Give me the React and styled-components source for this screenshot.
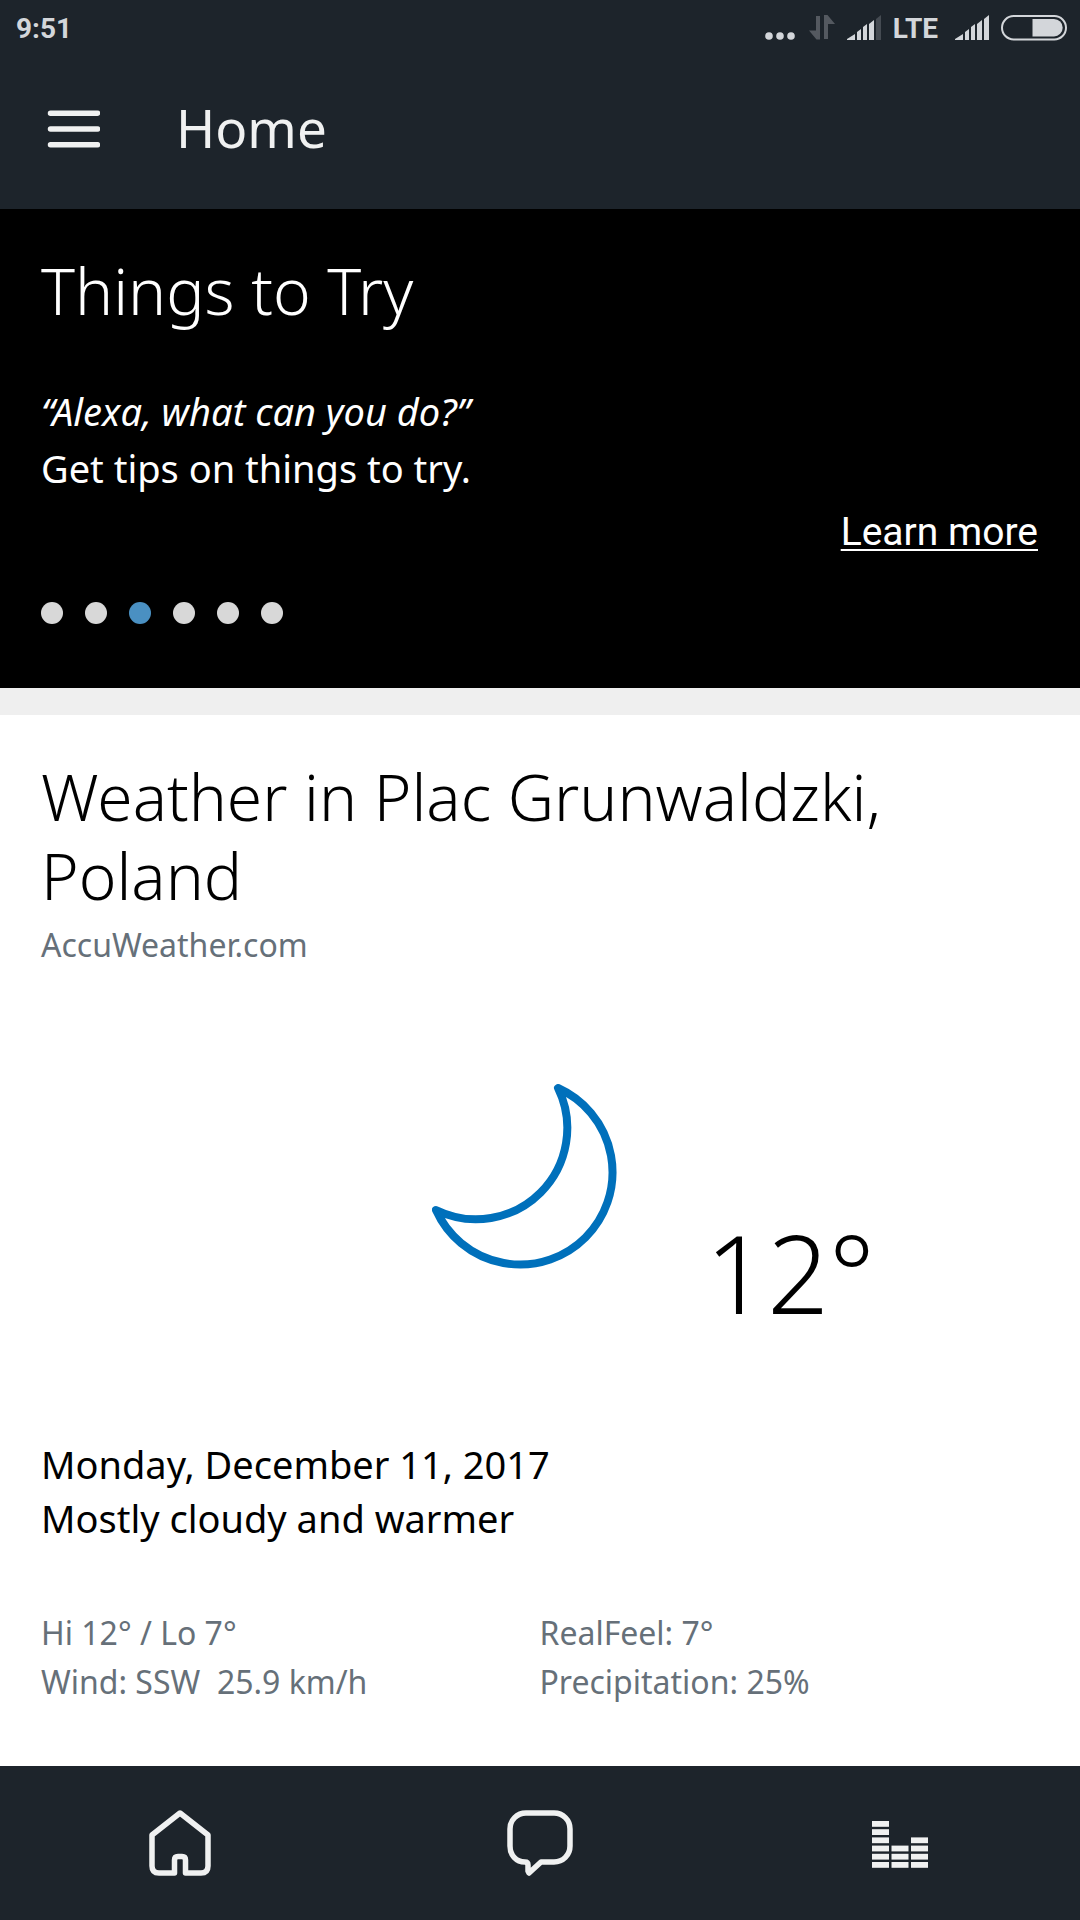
import { useState } from "react";
import styled, { createGlobalStyle } from "styled-components";

const GlobalStyle = createGlobalStyle`
  * {
    box-sizing: border-box;
  }
  body {
    margin: 0;
    background: #ffffff;
    font-family: "Noto Sans", "Open Sans", sans-serif;
  }
`;

const Page = styled.div`
  display: flex;
  flex-direction: column;
  min-height: 100vh;
`;

const StatusBar = styled.div`
  display: flex;
  justify-content: space-between;
  align-items: center;
  height: 56px;
  padding: 0 13px 0 16px;
  background: #1d242b;
  color: #d3d6da;
  font-family: Roboto, sans-serif;
  font-size: 28px;
  font-weight: 700;
`;

const StatusIcons = styled.div`
  display: flex;
  align-items: center;
  gap: 12px;
`;

const Network = styled.span`
  padding-right: 5px;
`;

const Header = styled.header`
  display: flex;
  align-items: center;
  gap: 76px;
  height: 153px;
  padding: 0 47px 8px;
  background: #1d242b;
  color: #f0f1f1;
`;

const HeaderTitle = styled.h1`
  margin: 0;
  padding-bottom: 2px;
  font-size: 53px;
  font-weight: 400;
`;

const IconButton = styled.button`
  display: flex;
  padding: 0;
  border: none;
  background: transparent;
  color: inherit;
`;

const Tips = styled.section`
  display: flex;
  flex-direction: column;
  padding: 42px 42px 64px 41px;
  background: #000000;
  color: #ffffff;
`;

const CardTitle = styled.h2`
  margin: 0;
  font-size: 64px;
  line-height: 79px;
  font-weight: 300;
`;

const TipText = styled.p`
  margin: 53px 0 7px;
  font-size: 38px;
  line-height: 57px;
`;

const LearnMore = styled.a`
  align-self: flex-end;
  color: inherit;
  font-family: Roboto, sans-serif;
  font-size: 39px;
  line-height: 57px;
  text-decoration-thickness: 2px;
  text-underline-offset: 4px;
`;

const Dots = styled.div`
  display: flex;
  gap: 22px;
  margin-top: 41px;
`;

const Dot = styled.button`
  width: 22px;
  height: 22px;
  padding: 0;
  border: none;
  border-radius: 50%;
  background: ${({ $active }) => ($active ? "#4a90c2" : "#d8d8d8")};
`;

const Weather = styled.section`
  flex: 1;
  padding: 42px 42px 60px 41px;
  border-top: 27px solid #efefef;
  color: #000000;
`;

const Source = styled.p`
  margin: 5px 0 0;
  color: #667079;
  font-size: 32px;
  line-height: 49px;
`;

const Current = styled.div`
  display: grid;
  grid-template-columns: 1fr auto 1fr;
  margin: 115px 0 104px;
`;

const Temperature = styled.div`
  padding: 129px 0 0 58px;
  font-size: 108px;
  line-height: 120px;
  font-weight: 300;
`;

const Summary = styled.p`
  margin: 0;
  font-size: 38px;
  line-height: 54px;
`;

const Details = styled.div`
  display: grid;
  grid-template-columns: 1fr 1fr;
  margin-top: 63px;
  color: #667079;
  font-size: 32px;
  line-height: 49px;
  white-space: pre;
`;

const TabBar = styled.nav`
  display: grid;
  grid-template-columns: repeat(3, 1fr);
  justify-items: center;
  align-items: center;
  height: 154px;
  background: #1d242b;
  color: #f0f1f1;
`;

const MoreIcon = () => (
  <svg width="32" height="26" fill="#d3d6da">
    <circle cx="4" cy="21" r="3.8" />
    <circle cx="15" cy="21" r="3.8" />
    <circle cx="26" cy="21" r="3.8" />
  </svg>
);

const TransferIcon = () => (
  <svg width="26" height="26" fill="#545960">
    <path d="M7 1h4v23.500H7.500L0 15.500h7zM15 24V0h3.500L26 9h-7v15z" />
  </svg>
);

const SignalIcon = ({ weak }) => (
  <svg width="34" height="26" fill="#d3d6da">
    <path d="M0 25v-1l8-5v6zM10 25v-8l4-3v11zM16 25V12l4-3v16zM22 25V9l5-4v20z" />
    <path d="M29 25V4l5-4v25z" fill={weak ? "#454b52" : "#d3d6da"} />
  </svg>
);

const BatteryIcon = () => (
  <svg width="66" height="26">
    <rect x="1" y="1" width="64" height="23.500" rx="11.700" fill="none" stroke="#d3d6da" strokeWidth="2" />
    <path d="M31.500 4h21.500a8.700 8.700 0 0 1 0 17.400H31.500z" fill="#d3d6da" />
  </svg>
);

const MenuIcon = () => (
  <svg width="53" height="38" stroke="currentColor" strokeWidth="5.500" strokeLinecap="round">
    <path d="M3.500 3.200h47M3.500 19h47M3.500 34.800h47" />
  </svg>
);

const MoonIcon = () => (
  <svg width="216" height="216" fill="none" stroke="#0070bb" strokeWidth="8" strokeLinejoin="round">
    <path d="M126 4A92.300 92.300 0 1 1 4 126A91.200 91.200 0 0 0 126 4z" />
  </svg>
);

const HomeIcon = () => (
  <svg width="62" height="66" fill="none" stroke="currentColor" strokeWidth="5.500" strokeLinejoin="round">
    <path d="M31 3L3 25v31q0 7 7 7h15.500V50q0-3.500 3.500-3.500h4q3.500 0 3.500 3.500v13H52q7 0 7-7V25z" />
  </svg>
);

const ChatIcon = () => (
  <svg width="66" height="66" fill="none" stroke="currentColor" strokeWidth="5.500" strokeLinejoin="round">
    <path d="M19 3h28c9 0 16 7 16 16v17c0 9-7 16-16 16H34L22 63l-1-2v-6q0-3-3-3C9 52 3 45 3 36V19C3 10 10 3 19 3z" />
  </svg>
);

const columns = [6, 3, 4];

const MusicIcon = () => (
  <svg width="56" height="50" fill="currentColor">
    {columns.map((bars, col) =>
      Array.from({ length: bars }, (_, i) => (
        <rect key={`${col}-${i}`} x={col * 19.500} y={44 - i * 8.200} width="17" height="5.800" />
      ))
    )}
  </svg>
);

export default function App() {
  const [slide, setSlide] = useState(2);

  return (
    <>
      <GlobalStyle />
      <Page>
        <StatusBar>
          <span>9:51</span>
          <StatusIcons>
            <MoreIcon />
            <TransferIcon />
            <SignalIcon weak />
            <Network>LTE</Network>
            <SignalIcon />
            <BatteryIcon />
          </StatusIcons>
        </StatusBar>

        <Header>
          <IconButton aria-label="Menu">
            <MenuIcon />
          </IconButton>
          <HeaderTitle>Home</HeaderTitle>
        </Header>

        <Tips>
          <CardTitle>Things to Try</CardTitle>
          <TipText>
            <em>“Alexa, what can you do?”</em>
            <br />
            Get tips on things to try.
          </TipText>
          <LearnMore href="#learn-more">Learn more</LearnMore>
          <Dots>
            {[0, 1, 2, 3, 4, 5].map((i) => (
              <Dot
                key={i}
                $active={i === slide}
                aria-label={`Tip ${i + 1}`}
                onClick={() => setSlide(i)}
              />
            ))}
          </Dots>
        </Tips>

        <Weather>
          <CardTitle>Weather in Plac Grunwaldzki, Poland</CardTitle>
          <Source>AccuWeather.com</Source>
          <Current>
            <span />
            <MoonIcon />
            <Temperature>12°</Temperature>
          </Current>
          <Summary>
            Monday, December 11, 2017
            <br />
            Mostly cloudy and warmer
          </Summary>
          <Details>
            <span>Hi 12° / Lo 7°</span>
            <span>RealFeel: 7°</span>
            <span>{"Wind: SSW  25.9 km/h"}</span>
            <span>Precipitation: 25%</span>
          </Details>
        </Weather>

        <TabBar>
          <IconButton aria-label="Home">
            <HomeIcon />
          </IconButton>
          <IconButton aria-label="Conversations">
            <ChatIcon />
          </IconButton>
          <IconButton aria-label="Now playing">
            <MusicIcon />
          </IconButton>
        </TabBar>
      </Page>
    </>
  );
}
